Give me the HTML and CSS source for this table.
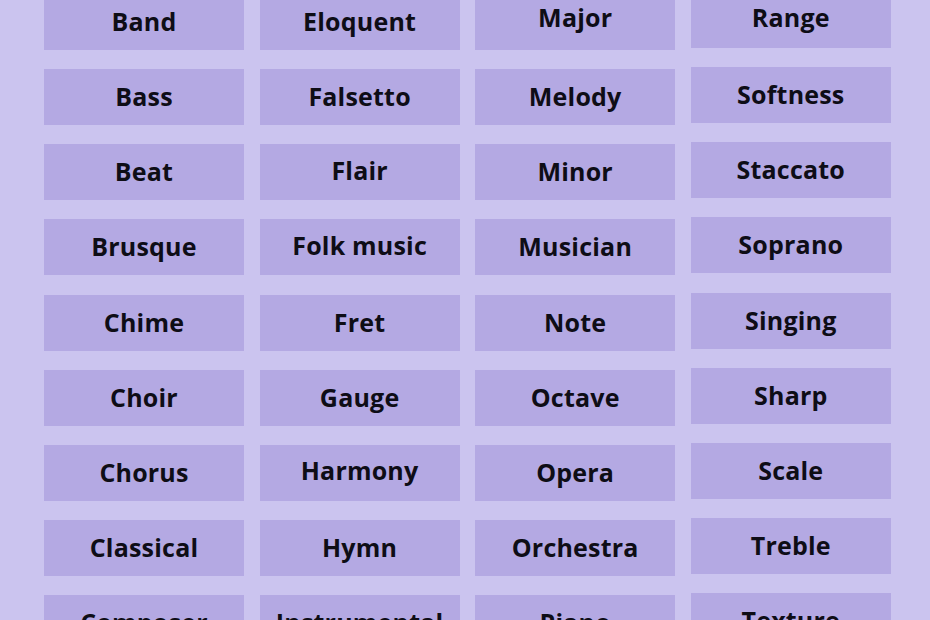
FILE: index.html
```html
<!DOCTYPE html>
<html lang="en">
<head>
<meta charset="utf-8">
<title>Music words</title>
<link rel="stylesheet" href="styles.css">
</head>
<body>
<main class="board">
  <div class="col">
    <div class="cell">Band</div>
    <div class="cell">Bass</div>
    <div class="cell">Beat</div>
    <div class="cell">Brusque</div>
    <div class="cell">Chime</div>
    <div class="cell">Choir</div>
    <div class="cell">Chorus</div>
    <div class="cell">Classical</div>
    <div class="cell">Composer</div>
  </div>
  <div class="col">
    <div class="cell">Eloquent</div>
    <div class="cell">Falsetto</div>
    <div class="cell up">Flair</div>
    <div class="cell up">Folk music</div>
    <div class="cell">Fret</div>
    <div class="cell">Gauge</div>
    <div class="cell up">Harmony</div>
    <div class="cell">Hymn</div>
    <div class="cell">Instrumental</div>
  </div>
  <div class="col">
    <div class="cell up2">Major</div>
    <div class="cell">Melody</div>
    <div class="cell">Minor</div>
    <div class="cell">Musician</div>
    <div class="cell">Note</div>
    <div class="cell">Octave</div>
    <div class="cell">Opera</div>
    <div class="cell">Orchestra</div>
    <div class="cell">Piano</div>
  </div>
  <div class="col col-last">
    <div class="cell up">Range</div>
    <div class="cell">Softness</div>
    <div class="cell">Staccato</div>
    <div class="cell">Soprano</div>
    <div class="cell">Singing</div>
    <div class="cell">Sharp</div>
    <div class="cell">Scale</div>
    <div class="cell">Treble</div>
    <div class="cell">Texture</div>
  </div>
</main>
</body>
</html>
```

FILE: styles.css
```css
html, body {
  margin: 0;
  padding: 0;
  height: 100%;
  overflow: hidden;
}

body {
  background: #cbc4ef;
  font-family: "Open Sans", "Liberation Sans", sans-serif;
  color: #0e0d16;
}

.board {
  display: grid;
  grid-template-columns: repeat(4, 200px);
  column-gap: 15.6px;
  padding-left: 44px;
  align-items: start;
}

.col {
  display: flex;
  flex-direction: column;
  gap: 19.2px;
  margin-top: -6.2px;
}

.col-last {
  margin-top: -8.2px;
}

.cell {
  height: 56px;
  box-sizing: border-box;
  background: #b4a9e3;
  display: flex;
  align-items: center;
  justify-content: center;
  font-size: 25px;
  font-weight: 700;
  letter-spacing: 0.2px;
  padding-bottom: 2px;
  white-space: nowrap;
}

.cell.up {
  padding-bottom: 5px;
}

.cell.up2 {
  padding-bottom: 9px;
}
```
